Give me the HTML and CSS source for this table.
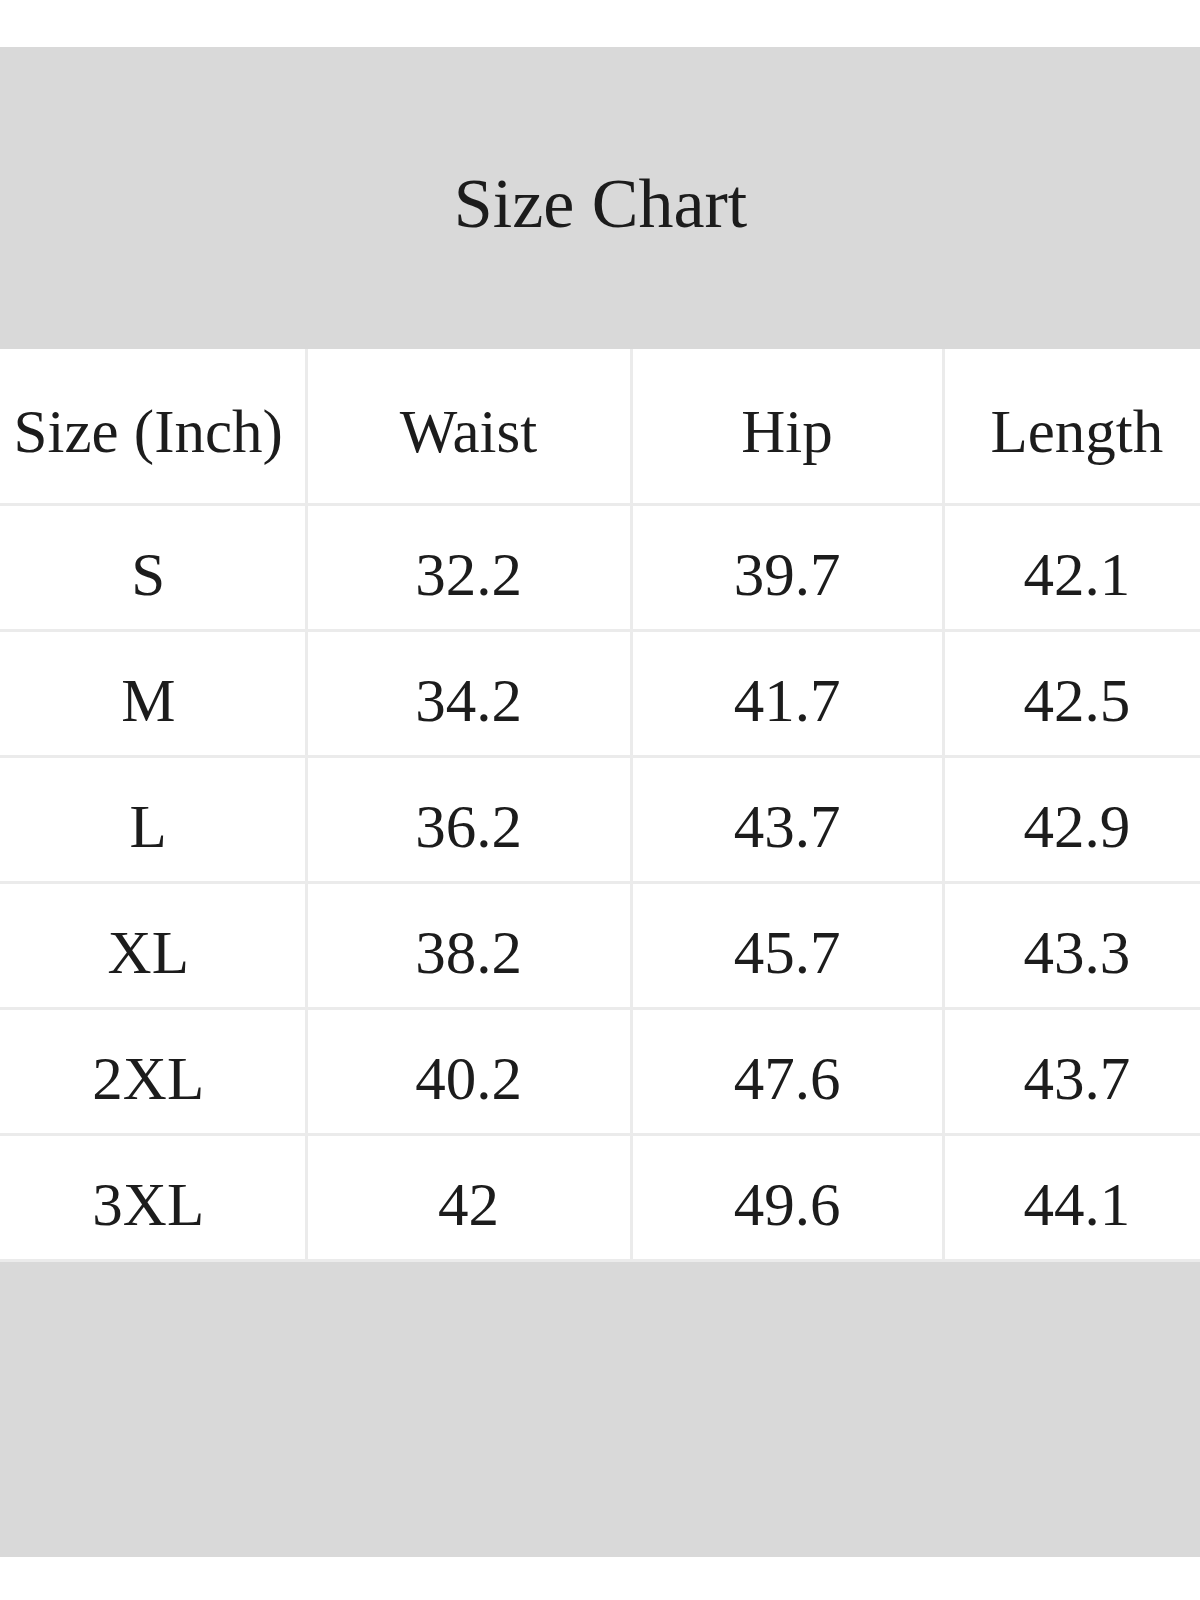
FILE: index.html
```html
<!DOCTYPE html>
<html lang="en">
<head>
<meta charset="utf-8">
<title>Size Chart</title>
<link rel="stylesheet" href="styles.css">
</head>
<body>
<div class="page">
  <table class="chart">
    <colgroup>
      <col class="c-size">
      <col class="c-waist">
      <col class="c-hip">
      <col class="c-length">
    </colgroup>
    <thead>
      <tr class="title-row"><th colspan="4" class="title">Size Chart</th></tr>
      <tr class="head-row">
        <th>Size (Inch)</th>
        <th>Waist</th>
        <th>Hip</th>
        <th>Length</th>
      </tr>
    </thead>
    <tbody>
      <tr><td>S</td><td>32.2</td><td>39.7</td><td>42.1</td></tr>
      <tr><td>M</td><td>34.2</td><td>41.7</td><td>42.5</td></tr>
      <tr><td>L</td><td>36.2</td><td>43.7</td><td>42.9</td></tr>
      <tr><td>XL</td><td>38.2</td><td>45.7</td><td>43.3</td></tr>
      <tr><td>2XL</td><td>40.2</td><td>47.6</td><td>43.7</td></tr>
      <tr><td>3XL</td><td>42</td><td>49.6</td><td>44.1</td></tr>
    </tbody>
    <tfoot>
      <tr class="foot-row"><td colspan="4"></td></tr>
    </tfoot>
  </table>
</div>
</body>
</html>
```

FILE: styles.css
```css
html, body {
  margin: 0;
  padding: 0;
  background: #ffffff;
  overflow: hidden;
}

.page {
  padding-top: 47px;
  width: 1200px;
  overflow: hidden;
}

.chart {
  margin-left: -8px;
  width: 1217px;
  table-layout: fixed;
  border-collapse: collapse;
  font-family: "Liberation Serif", "Times New Roman", serif;
  color: #1c1c1c;
}

.c-size { width: 314px; }
.c-waist { width: 325px; }
.c-hip { width: 312px; }
.c-length { width: 266px; }

.chart th,
.chart td {
  font-weight: normal;
  text-align: center;
  vertical-align: middle;
  line-height: 1;
  padding: 0;
  border: 3px solid #ebebeb;
}

.title-row .title {
  height: 291px;
  padding-top: 11px;
  background: #d9d9d9;
  border: none;
  font-size: 70px;
}

.head-row th {
  height: 143px;
  padding-top: 11px;
  font-size: 61px;
  border-top: none;
}

.chart tbody td {
  height: 109px;
  padding-top: 14px;
  font-size: 61px;
}

.chart tr > :first-child { border-left: none; }
.chart tr > :last-child { border-right: none; }

.foot-row td {
  height: 295px;
  background: #d9d9d9;
  border: none;
}
```
